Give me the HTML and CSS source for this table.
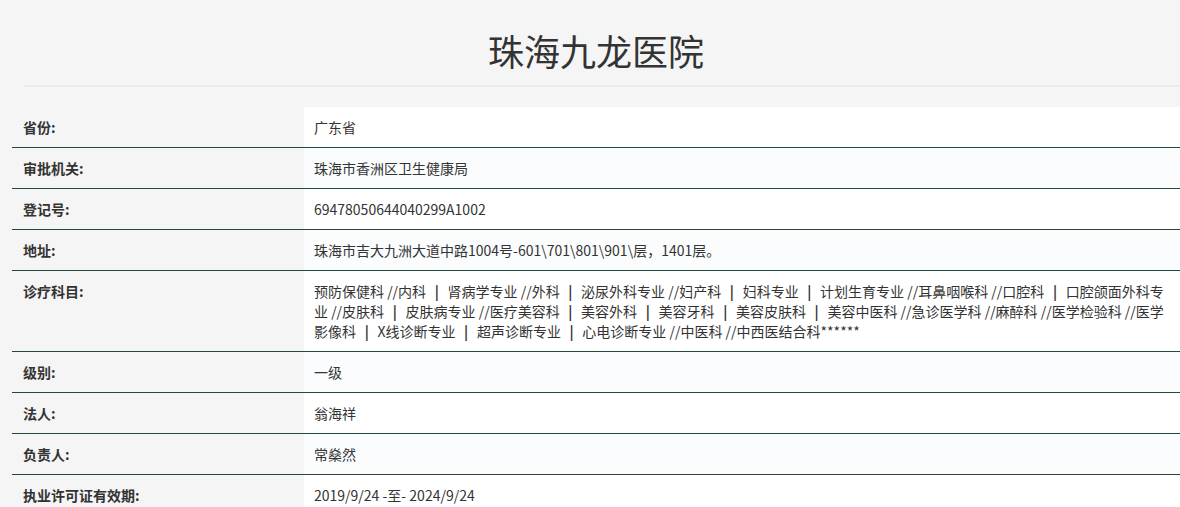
FILE: index.html
```html
<!DOCTYPE html>
<html lang="zh-CN">
<head>
<meta charset="utf-8">
<title>珠海九龙医院</title>
<link rel="stylesheet" href="styles.css">
</head>
<body>
<div class="page">
  <div class="head">
    <h1 class="title">珠海九龙医院</h1>
    <div class="rule"></div>
  </div>
  <div class="info">
    <div class="row"><div class="label">省份:</div><div class="value">广东省</div></div>
    <div class="row alt"><div class="label">审批机关:</div><div class="value">珠海市香洲区卫生健康局</div></div>
    <div class="row"><div class="label">登记号:</div><div class="value">69478050644040299A1002</div></div>
    <div class="row alt"><div class="label">地址:</div><div class="value">珠海市吉大九洲大道中路1004号-601\701\801\901\层，1401层。</div></div>
    <div class="row"><div class="label">诊疗科目:</div><div class="value">预防保健科 //内科 <b class="sep">|</b> 肾病学专业 //外科 <b class="sep">|</b> 泌尿外科专业 //妇产科 <b class="sep">|</b> 妇科专业 <b class="sep">|</b> 计划生育专业 //耳鼻咽喉科 //口腔科 <b class="sep">|</b> 口腔颌面外科专业 //皮肤科 <b class="sep">|</b> 皮肤病专业 //医疗美容科 <b class="sep">|</b> 美容外科 <b class="sep">|</b> 美容牙科 <b class="sep">|</b> 美容皮肤科 <b class="sep">|</b> 美容中医科 //急诊医学科 //麻醉科 //医学检验科 //医学影像科 <b class="sep">|</b> X线诊断专业 <b class="sep">|</b> 超声诊断专业 <b class="sep">|</b> 心电诊断专业 //中医科 //中西医结合科******</div></div>
    <div class="row alt"><div class="label">级别:</div><div class="value">一级</div></div>
    <div class="row"><div class="label">法人:</div><div class="value">翁海祥</div></div>
    <div class="row alt"><div class="label">负责人:</div><div class="value">常燊然</div></div>
    <div class="row"><div class="label">执业许可证有效期:</div><div class="value">2019/9/24 -至- 2024/9/24</div></div>
  </div>
</div>
</body>
</html>
```
FILE: styles.css
```css
html, body {
  margin: 0;
  padding: 0;
  background: #f5f5f5;
}
body {
  font-family: "Noto Sans CJK SC", "Noto Sans", sans-serif;
  color: #333;
  overflow: hidden;
}
.page {
  margin-left: 12px;
  width: 1168px;
}
.head {
  padding-top: 25px;
}
.title {
  margin: 0;
  font-size: 36px;
  line-height: 50px;
  font-weight: normal;
  text-align: center;
  color: #333;
}
.rule {
  margin: 10px 0 0 12px;
  height: 2px;
  background: #ebebeb;
}
.info {
  margin-top: 20px;
}
.row {
  display: grid;
  grid-template-columns: 292px 1fr;
  border-bottom: 1px solid #1f4c3a;
  font-size: 14px;
  line-height: 20px;
}
.label {
  padding: 10px 11px;
  font-weight: bold;
  color: #333;
}
.value {
  padding: 10px 10px;
  background: #fff;
  color: #333;
}
.row.alt .value {
  background: #fafcfd;
}
.sep {
  font-weight: bold;
  margin: 0 5.5px;
}
```
